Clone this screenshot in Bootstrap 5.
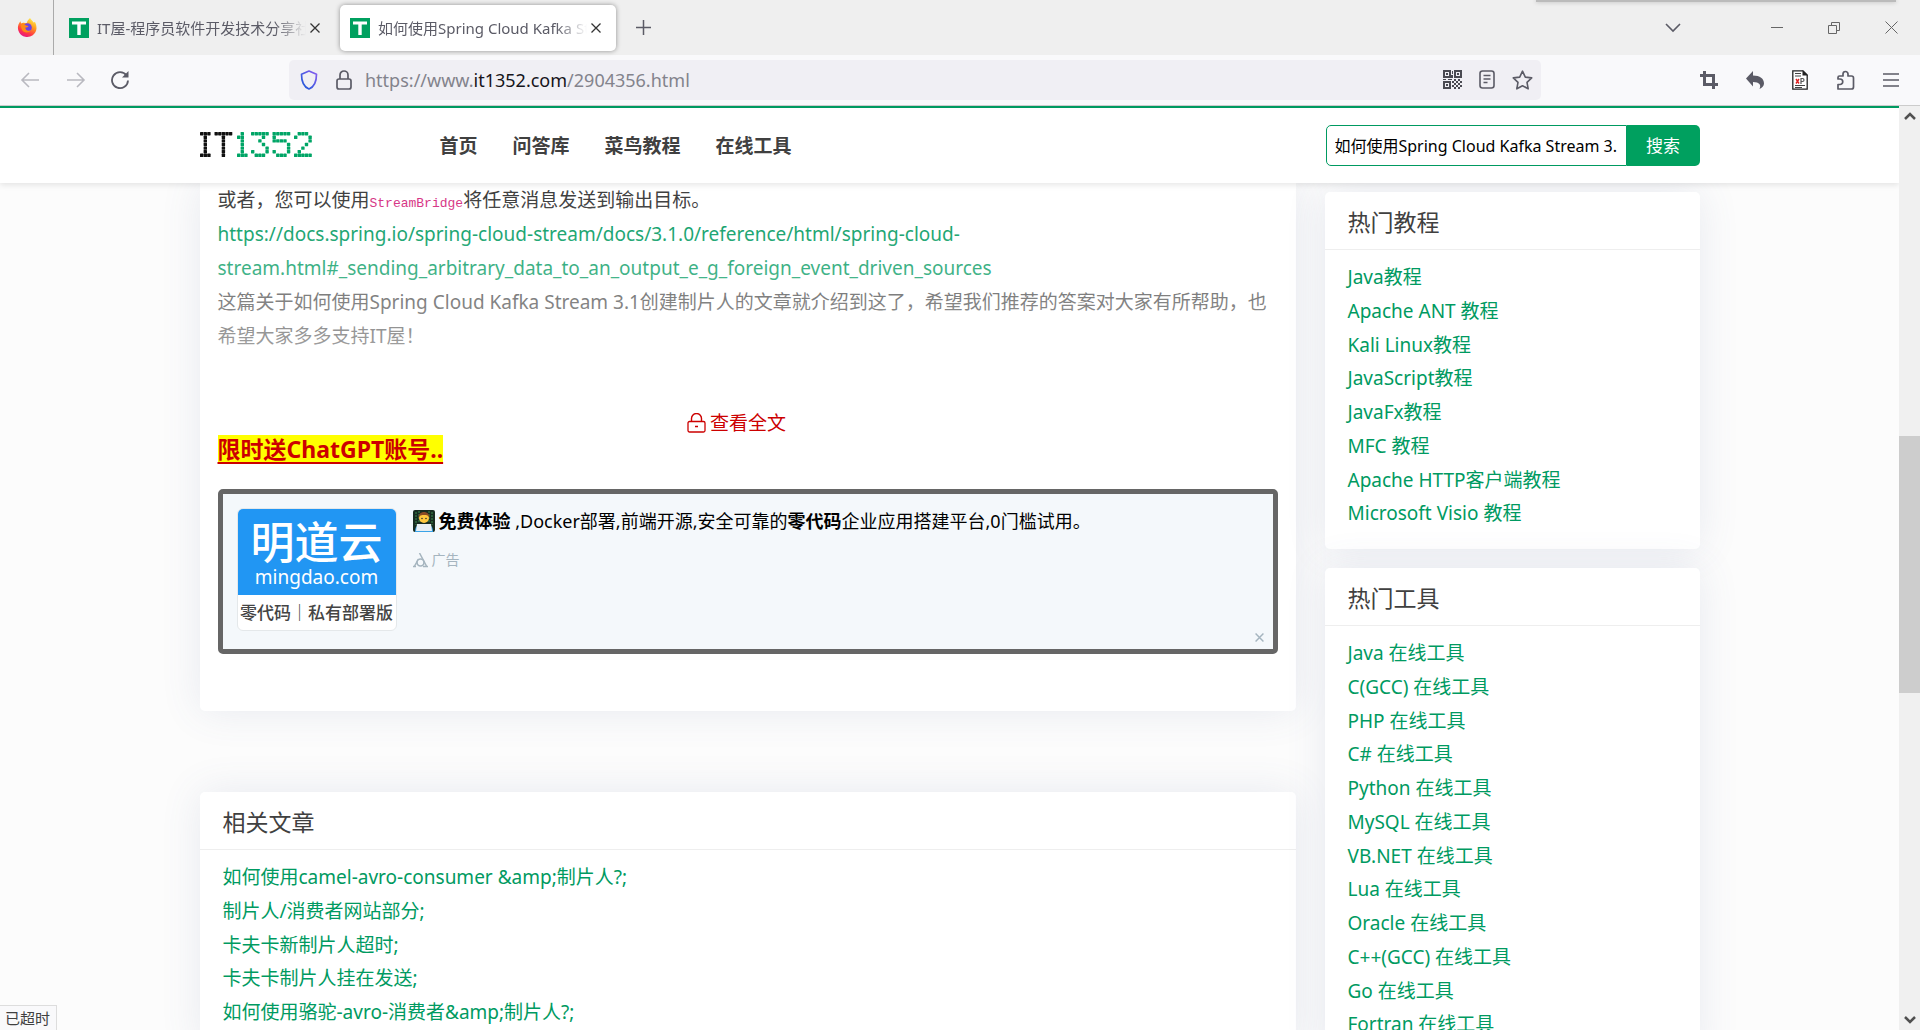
<!DOCTYPE html>
<html lang="zh-CN">
<head>
<meta charset="utf-8">
<meta name="viewport" content="width=device-width, initial-scale=1">
<title>如何使用Spring Cloud Kafka Stream 3.1创建制片人 - IT屋</title>
<link href="https://cdn.jsdelivr.net/npm/bootstrap@5.3.0/dist/css/bootstrap.min.css" rel="stylesheet">
<style>
:root{--it-green:#009a61}
body{font-family:"Noto Sans","Noto Sans CJK SC",sans-serif;font-size:19px;line-height:34px;color:#404040;background:#fcfcfc}
svg{display:block;flex:none}
a{color:var(--it-green);text-decoration:none}
.app{height:100vh;overflow:hidden}
/* browser frame */
.tabstrip{height:55px;background:#efefef;color:#5b5b66;font-size:15px;line-height:20px}
.pinned{width:54px;border-right:1px solid #aaa}
.tab-item{width:276px;height:46px;margin-left:5px;padding:0 15px 0 10px;border-radius:5px}
.tab-item.current{background:#fff;box-shadow:0 0 5px rgba(0,0,0,.4)}
.tab-text{flex:1;min-width:0;overflow:hidden;white-space:nowrap;-webkit-mask-image:linear-gradient(90deg,#000 85%,transparent);mask-image:linear-gradient(90deg,#000 85%,transparent)}
.plain-btn{background:none;border:0;padding:0;color:#4a4a55;display:flex;align-items:center;justify-content:center}
.window-tools{padding-right:22px}
.window-btns{gap:45px;margin-left:90px}
.edge-shade{top:0;right:24px;width:360px;height:2px;background:#bbb;box-shadow:0 0 4px #aaa}
.toolbar{height:51px;background:#f9f9fb;border-bottom:1px solid #ccc;padding:0 17px 0 20px}
.urlbar{width:1252px;height:40px;background:#f0eff4;border-radius:5px;padding:0 8px 0 10px;margin-left:159px}
.urlbar .address{font-size:18px;color:#83838c}
.urlbar .address b{font-weight:400;color:#15141a}
/* page */
.site-header{height:77px;border-top:2px solid var(--it-green);background:#fff;box-shadow:0 2px 6px rgba(0,0,0,.1);z-index:2}
.wrap{max-width:1500px;width:100%;margin:0 auto}
.site-nav{margin-left:126px;gap:35px}
.site-nav a{color:#404040;font-weight:700;line-height:28px}
.search{width:374px;height:41px}
.search input{border:1px solid var(--it-green);border-radius:5px 0 0 5px;padding:0 8px;font-size:16px;color:#000;min-width:0}
.search button{width:73px;background:#00a05f;color:#fff;border:0;border-radius:0 5px 5px 0;font-size:17px}
.panel{background:#fff;border-radius:5px;box-shadow:0 0 40px rgba(82,95,150,.12)}
.panel h2{font-size:23px;line-height:60px;height:58px;margin:0;padding:0 23px;font-weight:400;border-bottom:1px solid #eee}
.panel ul{margin:0;padding:10px 23px 19px;list-style:none}
.panel li:nth-child(4n){line-height:33px}
.side{width:375px;margin-left:29px;padding-top:9px}
.side .panel{margin-bottom:19px}
.article{padding:0 18px 57px;border-radius:0 0 5px 5px;margin-bottom:81px}
.article p{margin:0}
.article code{font-family:"Liberation Mono",monospace;font-size:13px;line-height:1;color:#d63384}
.faded{position:relative;height:204px}
.faded::after{content:"";position:absolute;inset:0;background:linear-gradient(rgba(255,255,255,0) 14px,#fff 314px);pointer-events:none}
.more{color:#c00;line-height:24px;padding-right:22px}
.promo{font-size:23px;line-height:28px;font-weight:700;color:#c00;background:#ff0;text-decoration:underline;text-underline-offset:4px}
.ad{border:5px solid #666;border-radius:5px;background:#f4f8fb;color:#000;height:165px;padding:14px 14px;margin-top:26px;font-size:18px;line-height:26px}
.ad-pic{width:160px;height:123px;border-radius:6px;overflow:hidden;background:#fff;border:1px solid #e4e8ea;text-align:center}
.ad-blue{height:86px;background:#2196f3;color:#fff}
.ad-name{font-size:44px;line-height:50px;padding-top:6px;font-weight:500;font-family:"Noto Sans CJK SC",sans-serif}
.ad-site{font-size:19px;line-height:24px}
.ad-sub{font-size:17px;line-height:34px;color:#444;font-weight:500;font-family:"Noto Sans CJK SC",sans-serif;white-space:nowrap}
.ad-tag{font-size:14px;line-height:20px;color:#a5b5bf}
.ad-close{right:5px;bottom:3px}
.scroll-track{width:21px;background:#f0f0f0;color:#505050}
.thumb{height:257px;background:#cdcdcd;margin-top:312px}
.status-tip{left:0;bottom:0;padding:0 6px 0 5px;border:1px solid #ddd;border-width:1px 1px 0 0;background:#f9f9fb;font-size:15px;line-height:24px;z-index:3}
</style>
<script src="https://cdn.jsdelivr.net/npm/bootstrap@5.3.0/dist/js/bootstrap.bundle.min.js"></script>
</head>
<body>
<div class="app d-flex flex-column position-relative">
  <div class="tabstrip d-flex flex-shrink-0 align-items-center position-relative">
    <div class="edge-shade position-absolute"></div>
    <div class="pinned h-100 d-flex align-items-center justify-content-center">
      <svg width="20" height="20" viewBox="0 0 20 20"><defs><linearGradient id="fx" x1=".8" y1="0" x2=".3" y2="1"><stop offset="0" stop-color="#fff44f"/><stop offset=".4" stop-color="#ff9a1f"/><stop offset=".75" stop-color="#ff3647"/><stop offset="1" stop-color="#e31587"/></linearGradient></defs><path d="M13 0c1 2 2.500 2.500 3.500 4.500L18 4c1 2 1.500 4 1.500 6.500A9.300 9.300 0 1 1 1.500 6.500C2 5 2.700 4 3.500 3.200L4 5.500c1-.8 2-1 3-.8 1 .3 2 .3 3 0C10 3 11.500 1.500 13 0z" fill="url(#fx)"/><circle cx="10.500" cy="9.500" r="4.300" fill="#6a42e5"/><path d="M3.500 7c2-1 4-1.500 5.500.5l2.500.5c-.5 1.500-2 1.500-3 1.500-.5 2.500 2.500 4.500 5.500 2.500-2 4-8.500 3-9.500-1.500z" fill="#ff8a16"/></svg>
    </div>
    <div class="tab-item d-flex align-items-center">
      <svg width="20" height="20" viewBox="0 0 20 20"><path fill="#00a05f" d="M0 0h20v20H0z"/><path fill="#fff" d="M3 3.500h14v3H11.700V17H8.300V6.500H3z"/></svg>
      <span class="tab-text ms-2">IT屋-程序员软件开发技术分享社区</span>
      <button class="plain-btn ms-1" aria-label="关闭标签页"><svg width="10" height="10" viewBox="0 0 10 10"><path d="M.5.5l9 9m0-9l-9 9" stroke="#333" stroke-width="1.300"/></svg></button>
    </div>
    <div class="tab-item current d-flex align-items-center">
      <svg width="20" height="20" viewBox="0 0 20 20"><path fill="#00a05f" d="M0 0h20v20H0z"/><path fill="#fff" d="M3 3.500h14v3H11.700V17H8.300V6.500H3z"/></svg>
      <span class="tab-text ms-2">如何使用Spring Cloud Kafka Stream 3.1</span>
      <button class="plain-btn ms-1" aria-label="关闭标签页"><svg width="10" height="10" viewBox="0 0 10 10"><path d="M.5.5l9 9m0-9l-9 9" stroke="#333" stroke-width="1.300"/></svg></button>
    </div>
    <button class="plain-btn ms-3 ps-1" aria-label="新标签页"><svg width="15" height="15" viewBox="0 0 15 15"><path d="M7.500 0v15M0 7.500h15" stroke="#5b5b66" stroke-width="1.500"/></svg></button>
    <div class="window-tools ms-auto d-flex align-items-center">
      <button class="plain-btn" aria-label="列出标签页"><svg width="16" height="10" viewBox="0 0 16 10"><path d="M1 1l7 7 7-7" fill="none" stroke="#5b5b66" stroke-width="1.600"/></svg></button>
      <div class="window-btns d-flex align-items-center">
      <button class="plain-btn" aria-label="最小化"><svg width="12" height="12" viewBox="0 0 12 12"><path d="M0 5.500h12" stroke="#666"/></svg></button>
      <button class="plain-btn" aria-label="还原"><svg width="12" height="12" viewBox="0 0 12 12"><path d="M.5 3.500h8v8h-8zM3.500 3V.5h8v8H9" fill="none" stroke="#666"/></svg></button>
      <button class="plain-btn" aria-label="关闭"><svg width="13" height="13" viewBox="0 0 13 13"><path d="M.5.5l12 12m0-12l-12 12" stroke="#666"/></svg></button>
      </div>
    </div>
  </div>
  <div class="toolbar d-flex flex-shrink-0 align-items-center">
    <div class="d-flex align-items-center gap-4">
      <button class="plain-btn me-1" aria-label="后退"><svg width="19" height="16" viewBox="0 0 19 16"><path d="M19 8H2M9 1L2 8l7 7" fill="none" stroke="#b9b9c0" stroke-width="1.600"/></svg></button>
      <button class="plain-btn" aria-label="前进"><svg width="19" height="16" viewBox="0 0 19 16"><path d="M0 8h17M10 1l7 7-7 7" fill="none" stroke="#b9b9c0" stroke-width="1.600"/></svg></button>
      <button class="plain-btn" aria-label="刷新"><svg width="20" height="20" viewBox="0 0 20 20"><path d="M16.500 5.500A8 8 0 1 0 18 10.500" fill="none" stroke="#5b5b66" stroke-width="1.800"/><path d="M18.500 1v6.500h-6.500z" fill="#5b5b66"/></svg></button>
    </div>
    <div class="urlbar d-flex align-items-center">
      <svg width="20" height="20" viewBox="0 0 20 20"><defs><linearGradient id="sh" x1="1" y1="0" x2="0" y2="1"><stop offset="0" stop-color="#8a5cf0"/><stop offset="1" stop-color="#1558d6"/></linearGradient></defs><path d="M10 1l7.500 3.200C17.500 12 15 17 10 19 5 17 2.500 12 2.500 4.200z" fill="none" stroke="url(#sh)" stroke-width="1.700" stroke-linejoin="round"/></svg>
      <svg class="ms-3" width="18" height="20" viewBox="0 0 18 20"><rect x="2" y="9" width="14" height="10" rx="2" fill="none" stroke="#5b5b66" stroke-width="1.700"/><path d="M5 9V5a4 4 0 0 1 8 0v4" fill="none" stroke="#5b5b66" stroke-width="1.700"/></svg>
      <span class="address ms-2 ps-1">https://www.<b>it1352.com</b>/2904356.html</span>
      <div class="ms-auto d-flex gap-3">
        <svg width="19" height="19" viewBox="0 0 19 19" fill="#4a4a52"><path fill-rule="evenodd" d="M0 0h8v8H0zM2 2v4h4V2zM11 0h8v8h-8zM13 2v4h4V2zM0 11h8v8H0zM2 13v4h4v-4z"/><path d="M3 3h2v2H3zM14 3h2v2h-2zM3 14h2v2H3zM9 1h1v3H9zM8 5h2v3H8zM0 9h3v1H0zM5 9h4v1H5zM9 11h2v2H9zM11 9h2v2h-2zM13 11h2v2h-2zM15 9h2v2h-2zM17 11h2v2h-2zM11 13h2v2h-2zM15 13h2v2h-2zM9 15h2v2H9zM13 15h2v2h-2zM17 15h2v2h-2zM11 17h2v2h-2zM15 17h2v2h-2z"/></svg>
        <svg width="18" height="19" viewBox="0 0 18 19" fill="none" stroke="#5b5b66" stroke-width="1.600"><rect x="2" y="1" width="14" height="17" rx="2.500"/><path d="M5.500 5.500h7M5.500 9h7M5.500 12.500h4"/></svg>
        <svg width="21" height="20" viewBox="0 0 21 20"><path d="M10.500 1.200l2.800 5.900 6.400.8-4.700 4.500 1.200 6.400-5.700-3.100-5.700 3.100L6 12.400 1.300 7.900l6.400-.8z" fill="none" stroke="#5b5b66" stroke-width="1.600" stroke-linejoin="round"/></svg>
      </div>
    </div>
    <div class="ms-auto d-flex align-items-center gap-4">
      <svg class="me-1" width="18" height="18" viewBox="0 0 18 18"><path d="M0 4.500h13.500V18M4.500 0v13.500H18" fill="none" stroke="#5b5b66" stroke-width="3"/></svg>
      <svg class="me-1" width="18" height="18" viewBox="0 0 18 18"><path d="M7 0v4.500c7 0 11 3 11 8 0 2.500-2 4.500-4.500 5.500 2-4 0-7-6.500-7v4.500L0 7.500z" fill="#5b5b66"/></svg>
      <svg class="me-1" width="16" height="20" viewBox="0 0 16 20"><path d="M.8.8H11l4.200 4.200v14.200H.8z" fill="#fff" stroke="#222" stroke-width="1.300"/><path d="M10.500 0L16 5.500h-5.500z" fill="#222"/><path d="M3 3.500h6M3 6h6M3 15.500h10M3 17.500h7" stroke="#444"/><path d="M4 9l3 4.500m0-4.500l-3 4.500" fill="none" stroke="#d22" stroke-width="1.400"/><path d="M9 14V8.500h1.500a1.500 1.500 0 0 1 0 3H9" fill="none" stroke="#555" stroke-width="1.200"/></svg>
      <svg class="me-1" width="19" height="20" viewBox="0 0 19 20"><path d="M2 19h13.500a2 2 0 0 0 2-2V8a2 2 0 0 0-2-2H12V4a2.500 2.500 0 0 0-5 0v2H3.500A1.500 1.500 0 0 0 2 7.500V9h2a2.500 2.500 0 0 1 0 5.500H2z" fill="none" stroke="#5b5b66" stroke-width="1.700" stroke-linejoin="round"/></svg>
      <svg class="me-1" width="16" height="14" viewBox="0 0 16 14"><path d="M0 1h16M0 7h16M0 13h16" stroke="#5b5b66" stroke-width="1.500"/></svg>
    </div>
  </div>
  <div class="d-flex flex-grow-1 overflow-hidden">
    <div class="flex-grow-1 d-flex flex-column overflow-hidden">
      <header class="site-header position-relative flex-shrink-0 d-flex">
        <div class="wrap d-flex align-items-center">
          <a href="#" aria-label="IT1352"><svg id="logo" width="114" height="28" viewBox="0 0 114 28"></svg></a>
          <nav class="site-nav d-flex"><a href="#">首页</a><a href="#">问答库</a><a href="#">菜鸟教程</a><a href="#">在线工具</a></nav>
          <form class="search d-flex ms-auto"><input class="flex-grow-1" type="text" aria-label="搜索内容" value="如何使用Spring Cloud Kafka Stream 3.1创建制片人"><button type="button">搜索</button></form>
        </div>
      </header>
      <main class="wrap d-flex align-items-start">
        <div class="flex-grow-1">
          <article class="panel article">
            <div class="faded">
              <p>或者，您可以使用<code>StreamBridge</code>将任意消息发送到输出目标。</p>
              <p><a href="#">https://docs.spring.io/spring-cloud-stream/docs/3.1.0/reference/html/spring-cloud-<br>stream.html#_sending_arbitrary_data_to_an_output_e_g_foreign_event_driven_sources</a></p>
              <p>这篇关于如何使用Spring Cloud Kafka Stream 3.1创建制片人的文章就介绍到这了，希望我们推荐的答案对大家有所帮助，也<br>希望大家多多支持IT屋！</p>
            </div>
            <a href="#" class="more d-flex align-items-center justify-content-center mt-4"><svg class="me-1" width="19" height="20" viewBox="0 0 19 20"><rect x="1" y="8.500" width="17" height="10.500" rx="1.500" fill="none" stroke="#c00" stroke-width="1.300"/><path d="M4.500 8.500V5.500a5 5 0 0 1 10 0v3M8 13.500h3" fill="none" stroke="#c00" stroke-width="1.400"/></svg>查看全文</a>
            <div class="d-flex"><a href="#" class="promo">限时送ChatGPT账号..</a></div>
            <section class="ad d-flex position-relative">
              <div class="ad-pic flex-shrink-0"><div class="ad-blue"><div class="ad-name">明道云</div><div class="ad-site">mingdao.com</div></div><div class="ad-sub">零代码｜私有部署版</div></div>
              <div class="ms-3">
                <div class="d-flex align-items-center"><svg class="me-1" width="22" height="22" viewBox="0 0 22 22"><rect width="22" height="22" rx="2" fill="#172b20"/><path d="M3 2v13M6 1v12M16 1v12M19 2v13" stroke="#3c8b4c" stroke-dasharray="2 1"/><circle cx="11" cy="8" r="5" fill="#ffc83d"/><path d="M5.500 8c-.5-8 11.500-8 11 0-1-3-3-3-5-3-3 0-5 0-6 3z" fill="#8a4b25"/><path d="M2 22c0-7 4-8 9-8s9 1 9 8z" fill="#3aa4e8"/><path d="M4 14h14l1 7H3z" fill="#e8eef2"/><circle cx="9" cy="8.500" r=".8" fill="#333"/><circle cx="13" cy="8.500" r=".8" fill="#333"/></svg><a href="#" class="text-black"><b>免费体验</b> ,Docker部署,前端开源,安全可靠的<b>零代码</b>企业应用搭建平台,0门槛试用。</a></div>
                <div class="ad-tag d-flex align-items-center mt-3"><svg class="me-1" width="15" height="15" viewBox="0 0 15 15"><path d="M6.500 0L14 14M5.500 6L1 14M0 13.500h3M10 13.500h5" fill="none" stroke="#a5b5bf" stroke-width="1.500"/><circle cx="7.500" cy="9.500" r="3.500" fill="#f4f8fb" stroke="#a5b5bf" stroke-width="1.700"/></svg>广告</div>
              </div>
              <button class="plain-btn ad-close position-absolute p-1" aria-label="关闭广告"><svg width="9" height="9" viewBox="0 0 8 8"><path d="M.5.5l7 7m0-7l-7 7" stroke="#a5b5bf" stroke-width="1.300"/></svg></button>
            </section>
          </article>
          <section class="panel">
            <h2>相关文章</h2>
            <ul>
              <li><a href="#">如何使用camel-avro-consumer &amp;amp;制片人?;</a></li>
              <li><a href="#">制片人/消费者网站部分;</a></li>
              <li><a href="#">卡夫卡新制片人超时;</a></li>
              <li><a href="#">卡夫卡制片人挂在发送;</a></li>
              <li><a href="#">如何使用骆驼-avro-消费者&amp;amp;制片人?;</a></li>
            </ul>
          </section>
        </div>
        <aside class="side flex-shrink-0">
          <section class="panel">
            <h2>热门教程</h2>
            <ul>
              <li><a href="#">Java教程</a></li><li><a href="#">Apache ANT 教程</a></li><li><a href="#">Kali Linux教程</a></li><li><a href="#">JavaScript教程</a></li><li><a href="#">JavaFx教程</a></li><li><a href="#">MFC 教程</a></li><li><a href="#">Apache HTTP客户端教程</a></li><li><a href="#">Microsoft Visio 教程</a></li>
            </ul>
          </section>
          <section class="panel">
            <h2>热门工具</h2>
            <ul>
              <li><a href="#">Java 在线工具</a></li><li><a href="#">C(GCC) 在线工具</a></li><li><a href="#">PHP 在线工具</a></li><li><a href="#">C# 在线工具</a></li><li><a href="#">Python 在线工具</a></li><li><a href="#">MySQL 在线工具</a></li><li><a href="#">VB.NET 在线工具</a></li><li><a href="#">Lua 在线工具</a></li><li><a href="#">Oracle 在线工具</a></li><li><a href="#">C++(GCC) 在线工具</a></li><li><a href="#">Go 在线工具</a></li><li><a href="#">Fortran 在线工具</a></li>
            </ul>
          </section>
        </aside>
      </main>
    </div>
    <div class="scroll-track flex-shrink-0 d-flex flex-column align-items-center">
      <svg class="mt-1" width="12" height="14" viewBox="0 0 12 14"><path d="M1 9l5-5 5 5" fill="none" stroke="currentColor" stroke-width="2.500"/></svg>
      <div class="thumb w-100"></div>
      <svg class="mt-auto mb-1" width="12" height="12" viewBox="0 0 12 12"><path d="M1 3l5 5 5-5" fill="none" stroke="currentColor" stroke-width="2.500"/></svg>
    </div>
  </div>
  <div class="status-tip position-absolute">已超时</div>
</div>
<script>
// dot-matrix logo: start x of each glyph, colour, then seven rows of cells
const glyphs=[
 [0,"#111","### .#. .#. .#. .#. .#. ###"],
 [14.5,"#111","##### ..#.. ..#.. ..#.. ..#.. ..#.. ..#.."],
 [37,"#00a566",".#. ##. .#. .#. .#. .#. ###"],
 [51,"#00a566","##### ...#. ..#.. ...#. ....# #...# .###."],
 [72.5,"#00a566","##### #.... ####. ....# ....# #...# .###."],
 [94,"#00a566",".###. #...# ....# ...#. ..#.. .#... #####"]];
let out="";
for(const [x,color,rows] of glyphs)
  rows.split(" ").forEach((r,y)=>[...r].forEach((c,k)=>{
    if(c==="#")out+=`<rect x="${x+k*3.6}" y="${y*3.6}" width="3.4" height="3.4" rx=".6" fill="${color}"/>`;
  }));
document.getElementById("logo").innerHTML=out;
</script>
</body>
</html>
